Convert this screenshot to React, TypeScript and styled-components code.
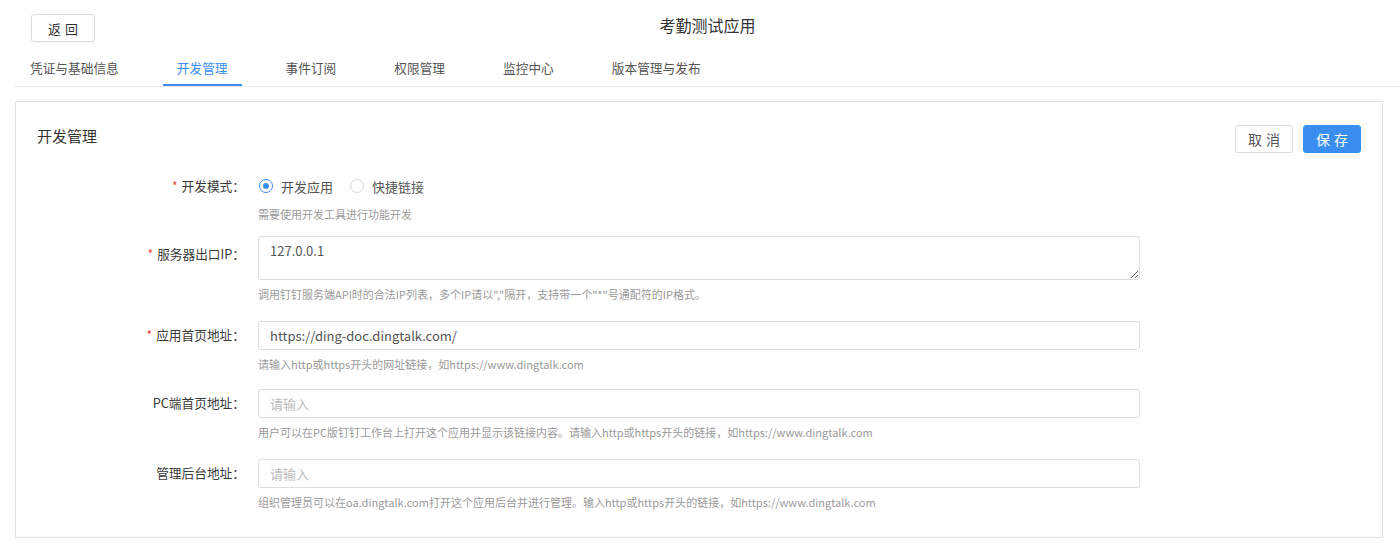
import React from 'react';
import styled, { createGlobalStyle } from 'styled-components';

const GlobalStyle = createGlobalStyle`
    html, body {
        margin: 0;
        padding: 0;
        background: #ffffff;
    }
    body {
        font-family: "Noto Sans CJK SC", "Noto Sans", "Liberation Sans", sans-serif;
        color: #333333;
        -webkit-font-smoothing: antialiased;
    }
    * {
        box-sizing: border-box;
    }
`;

const blue = '#3a8ef0';

const tabs = ['凭证与基础信息', '开发管理', '事件订阅', '权限管理', '监控中心', '版本管理与发布'];

interface FieldProps {
    label: string;
    required?: boolean;
    help: string;
    children: React.ReactNode;
    labelOffset?: number;
    spacing?: number;
}

function Field({ label, required, help, children, labelOffset, spacing }: FieldProps) {
    return (
        <StyledField spacing={spacing}>
            <StyledLabel offset={labelOffset}>
                {required && <Required>*</Required>}
                {label}：
            </StyledLabel>
            <Control>
                {children}
                <Help>{help}</Help>
            </Control>
        </StyledField>
    );
}

export default function App() {
    return (
        <Page>
            <GlobalStyle />
            <TopBar>
                <BackButton>返回</BackButton>
                <AppTitle>考勤测试应用</AppTitle>
            </TopBar>
            <TabBar>
                {tabs.map((t) => (
                    <Tab key={t} active={t === '开发管理'}>
                        {t}
                    </Tab>
                ))}
            </TabBar>
            <Card>
                <CardHeader>
                    <CardTitle>开发管理</CardTitle>
                    <Actions>
                        <Button>取消</Button>
                        <Button primary>保存</Button>
                    </Actions>
                </CardHeader>
                <Form>
                    <Field label="开发模式" required spacing={13} help="需要使用开发工具进行功能开发">
                        <RadioGroup>
                            <RadioItem>
                                <RadioDot checked />
                                开发应用
                            </RadioItem>
                            <RadioItem>
                                <RadioDot />
                                快捷链接
                            </RadioItem>
                        </RadioGroup>
                    </Field>
                    <Field
                        label="服务器出口IP"
                        required
                        labelOffset={4}
                        spacing={18}
                        help={'调用钉钉服务端API时的合法IP列表，多个IP请以","隔开，支持带一个"*"号通配符的IP格式。'}
                    >
                        <TextArea defaultValue="127.0.0.1" />
                    </Field>
                    <Field
                        label="应用首页地址"
                        required
                        spacing={16}
                        help="请输入http或https开头的网址链接，如https://www.dingtalk.com"
                    >
                        <Input defaultValue="https://ding-doc.dingtalk.com/" />
                    </Field>
                    <Field
                        label="PC端首页地址"
                        spacing={18}
                        help="用户可以在PC版钉钉工作台上打开这个应用并显示该链接内容。请输入http或https开头的链接，如https://www.dingtalk.com"
                    >
                        <Input placeholder="请输入" />
                    </Field>
                    <Field
                        label="管理后台地址"
                        spacing={0}
                        help="组织管理员可以在oa.dingtalk.com打开这个应用后台并进行管理。输入http或https开头的链接，如https://www.dingtalk.com"
                    >
                        <Input placeholder="请输入" />
                    </Field>
                </Form>
            </Card>
        </Page>
    );
}

const Page = styled.div`
    width: 1400px;
    padding-left: 15px;
`;

const TopBar = styled.div`
    position: relative;
    height: 50px;
    display: flex;
    align-items: flex-start;
    padding-top: 14px;
`;

const BackButton = styled.button`
    margin-left: 16px;
    width: 64px;
    height: 28px;
    border: 1px solid #dcdcdc;
    border-radius: 3px;
    background: #ffffff;
    color: #333333;
    font-family: inherit;
    font-size: 13px;
    letter-spacing: 4px;
    padding: 0 0 0 4px;
    box-shadow: 0 1px 2px rgba(0, 0, 0, 0.05);
`;

const AppTitle = styled.div`
    position: absolute;
    left: 0;
    right: 0;
    top: 14px;
    text-align: center;
    font-size: 16px;
    line-height: 22px;
    color: #333333;
    pointer-events: none;
`;

const TabBar = styled.div`
    display: flex;
    height: 37px;
    border-bottom: 1px solid #e8e8e8;
    padding-left: 1px;
`;

const Tab = styled.div<{ active?: boolean }>`
    height: 36px;
    padding: 0 14px;
    margin-right: 30px;
    font-size: 12.7px;
    line-height: 36px;
    color: ${(p) => (p.active ? blue : '#555555')};
    border-bottom: 2px solid ${(p) => (p.active ? blue : 'transparent')};
    margin-bottom: -1px;
    white-space: nowrap;
`;

const Card = styled.div`
    width: 1368px;
    margin-top: 14px;
    border: 1px solid #e3e3e3;
    padding: 23px 21px 25px 0;
    height: 437px;
`;

const CardHeader = styled.div`
    display: flex;
    justify-content: space-between;
    align-items: flex-start;
    padding-left: 21px;
`;

const CardTitle = styled.div`
    font-size: 15px;
    line-height: 22px;
    color: #333333;
`;

const Actions = styled.div`
    display: flex;
    gap: 10px;
`;

const Button = styled.button<{ primary?: boolean }>`
    width: 58px;
    height: 28px;
    border-radius: 3px;
    font-family: inherit;
    font-size: 14px;
    letter-spacing: 4px;
    padding: 0 0 0 4px;
    border: 1px solid ${(p) => (p.primary ? blue : '#dcdcdc')};
    background: ${(p) => (p.primary ? blue : '#ffffff')};
    color: ${(p) => (p.primary ? '#ffffff' : '#555555')};
`;

const Form = styled.div`
    margin-top: 19px;
    display: flex;
    flex-direction: column;
`;

const StyledField = styled.div<{ spacing?: number }>`
    display: grid;
    grid-template-columns: 229px 882px;
    column-gap: 13px;
    margin-bottom: ${(p) => p.spacing ?? 16}px;
`;

const StyledLabel = styled.div<{ offset?: number }>`
    text-align: right;
    font-size: 12.7px;
    line-height: 28px;
    color: #3a3a3a;
    padding-top: ${(p) => p.offset ?? 0}px;
    white-space: nowrap;
`;

const Required = styled.span`
    color: #f04134;
    margin-right: 4px;
    font-size: 12px;
`;

const Control = styled.div`
    display: flex;
    flex-direction: column;
`;

const Help = styled.div`
    margin-top: 5px;
    font-size: 11px;
    line-height: 18px;
    color: #9a9a9a;
    white-space: nowrap;
`;

const RadioGroup = styled.div`
    display: flex;
    align-items: center;
    height: 28px;
`;

const RadioItem = styled.label`
    display: inline-flex;
    align-items: center;
    gap: 8px;
    margin-right: 16px;
    font-size: 13px;
    color: #555555;
`;

const RadioDot = styled.span<{ checked?: boolean }>`
    position: relative;
    width: 14px;
    height: 14px;
    border-radius: 50%;
    border: 1px solid ${(p) => (p.checked ? blue : '#d9d9d9')};
    background: #ffffff;
    margin-left: 1px;

    &::after {
        content: '';
        display: ${(p) => (p.checked ? 'block' : 'none')};
        position: absolute;
        left: 3px;
        top: 3px;
        width: 6px;
        height: 6px;
        border-radius: 50%;
        background: ${blue};
    }
`;

const TextArea = styled.textarea`
    width: 882px;
    height: 44px;
    border: 1px solid #dedede;
    border-radius: 3px;
    padding: 5px 11px;
    font-family: inherit;
    font-size: 13px;
    line-height: 18px;
    color: #555555;
    resize: vertical;
    outline: none;
    display: block;
`;

const Input = styled.input`
    width: 882px;
    height: 29px;
    border: 1px solid #dedede;
    border-radius: 3px;
    padding: 0 11px;
    font-family: inherit;
    font-size: 13px;
    color: #555555;
    outline: none;

    &::placeholder {
        color: #bbbbbb;
    }
`;
